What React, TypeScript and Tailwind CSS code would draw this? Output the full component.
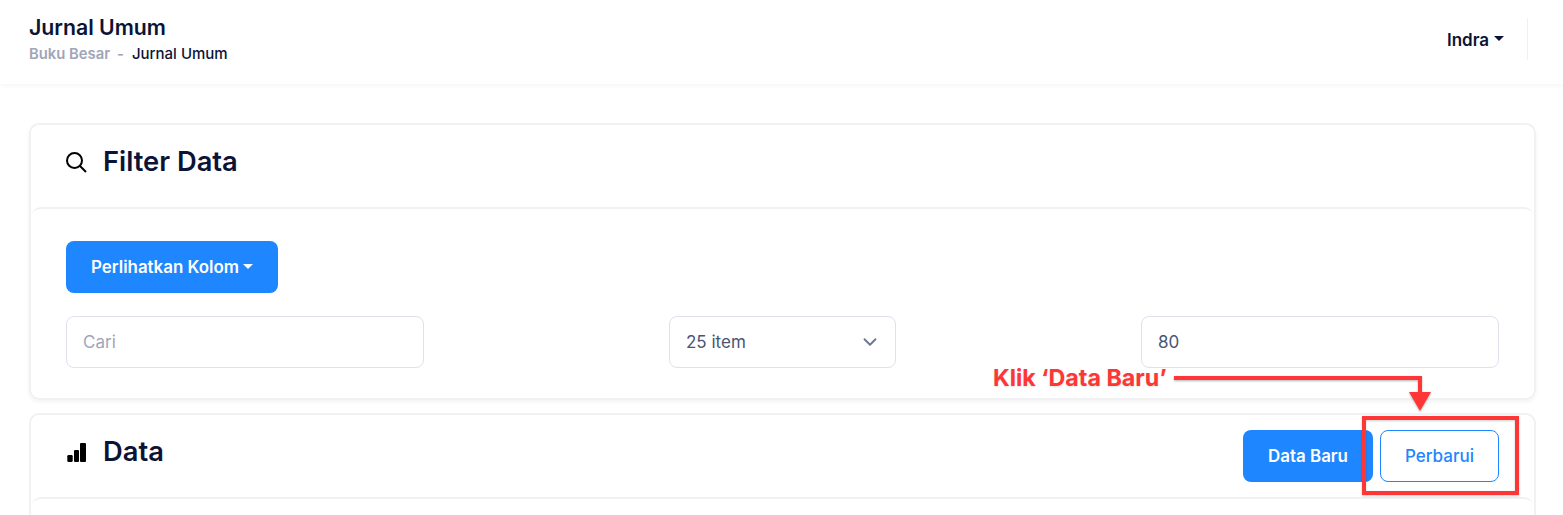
import { ChevronDown } from "lucide-react";

function Caret({ className }: { className: string }) {
  return (
    <svg width="10" height="5" viewBox="0 0 10 5" className={className}>
      <path d="M0 0h10L5 5z" fill="currentColor" />
    </svg>
  );
}

function Annotation() {
  return (
    <>
      <span className="absolute left-[993px] top-[364px] text-[23.25px] leading-[28px] font-bold text-[#ff3636] [text-shadow:0_1px_2px_rgba(0,0,0,0.12)]">
        Klik ‘Data Baru’
      </span>
      <svg className="absolute left-[1160px] top-[370px] drop-shadow-[0_1px_1px_rgba(0,0,0,0.3)]" width="280" height="44" viewBox="0 0 280 44">
        <path d="M14 8H260V22" fill="none" stroke="#ff3636" strokeWidth="4" />
        <path d="M249 22H271L260 41z" fill="#ff3636" />
      </svg>
      <div className="absolute left-[1362px] top-[416px] w-[157px] h-[79px] border-[4px] border-[#ff3636] drop-shadow-[0_1px_1px_rgba(0,0,0,0.2)]" />
    </>
  );
}

export default function App() {
  return (
    <div className="relative h-[515px] overflow-hidden bg-white font-['Inter',sans-serif] text-[#0b1437]">
      <header className="flex h-[84px] items-start justify-between pt-[15px] pl-[29px] pr-[35px] shadow-[0_1px_6px_rgba(0,0,0,0.05)]">
        <div>
          <h1 className="text-[21.25px] leading-[24px] font-semibold">Jurnal Umum</h1>
          <div className="flex items-center mt-[5px] text-[14.8px] leading-[20px] font-semibold">
            <span className="text-[#a1a5b7]">Buku Besar</span>
            <span className="ml-[7px] mr-[8px] text-[#a1a5b7]">-</span>
            <span className="text-[15px] font-medium">Jurnal Umum</span>
          </div>
        </div>
        <div className="mt-[3px] flex h-[42px] items-center border-r border-[#eff0f3] pr-[23px]">
          <span className="pt-[4px] text-[17px] font-semibold">Indra</span>
          <Caret className="ml-[5px] mb-[2px]" />
        </div>
      </header>

      <main className="flex flex-col gap-[13px] pl-[29px] pr-[27px] pt-[39px]">
        <section className="rounded-[10px] border-2 border-[#f1f1f4] shadow-[0_2px_4px_rgba(0,0,0,0.05)]">
          <div className="flex h-[82px] items-center gap-[15px] px-[35px] pb-[8px]">
            <svg width="24" height="24" viewBox="0 0 24 24" fill="none" stroke="#000" strokeWidth="2" className="ml-[-2px]">
              <circle cx="10.500" cy="10.500" r="7.500" />
              <path d="M16 16l6 6" />
            </svg>
            <h2 className="text-[27.3px] font-semibold">Filter Data</h2>
          </div>
          <div className="rounded-[10px] border-t-2 border-[#f1f1f4] px-[35px] pt-[32px] pb-[30px]">
            <button className="flex h-[52px] items-center rounded-[8px] bg-[#1e86ff] px-[25px] text-[16.9px] font-semibold text-white">
              <span className="pt-[2px]">Perlihatkan Kolom</span>
              <Caret className="ml-[4px] mb-[1px]" />
            </button>
            <div className="mt-[23px] flex justify-between">
              <div className="flex h-[52px] w-[358px] items-center rounded-[8px] border border-[#dfe1ee] px-[16px] pt-[2px] text-[17px] text-[#a1a5b7]">
                Cari
              </div>
              <div className="flex h-[52px] w-[227px] items-center justify-between rounded-[8px] border border-[#dfe1ee] pl-[16px] pr-[14px] text-[17px] text-[#4a5574]">
                <span className="pt-[2px]">25 item</span>
                <ChevronDown size={22} strokeWidth={2} className="text-[#6b7591]" />
              </div>
              <div className="flex h-[52px] w-[358px] items-center rounded-[8px] border border-[#dfe1ee] px-[16px] pt-[2px] text-[17px] text-[#4a5574]">
                80
              </div>
            </div>
          </div>
        </section>

        <section className="h-[200px] rounded-[10px] border-2 border-[#f1f1f4]">
          <div className="flex h-[82px] items-center justify-between px-[35px]">
            <div className="mb-[8px] flex items-center gap-[13px]">
              <svg width="24" height="24" viewBox="0 0 24 24" fill="#000">
                <rect x="1.300" y="15" width="5.400" height="7" rx="1.200" />
                <rect x="8" y="10" width="5" height="12" rx="1" />
                <rect x="14" y="3" width="6" height="19" rx="1" />
              </svg>
              <h2 className="text-[27.3px] font-semibold">Data</h2>
            </div>
            <div className="flex gap-[7px]">
              <button className="h-[52px] w-[130px] rounded-[8px] bg-[#1e86ff] pt-[2px] text-[16.9px] font-semibold text-white">Data Baru</button>
              <button className="h-[52px] w-[119px] rounded-[8px] border border-[#1e86ff] pt-[2px] text-[17px] font-medium text-[#1e86ff]">Perbarui</button>
            </div>
          </div>
          <div className="h-full rounded-[10px] border-t-2 border-[#f1f1f4]" />
        </section>
      </main>

      <Annotation />
    </div>
  );
}
